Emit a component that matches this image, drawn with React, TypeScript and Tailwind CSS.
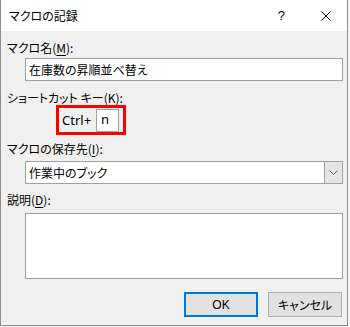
import React from 'react'

// Excel "マクロの記録" dialog

const jp = "font-['Segoe_UI','Noto_Sans_CJK_JP',sans-serif] [font-feature-settings:'palt']"

function Label({ text, k }: { text: string; k: string }) {
  return (
    <div className="h-[16px] leading-[16px] text-[12px] text-black">
      {text}(<span className="underline underline-offset-2">{k}</span>):
    </div>
  )
}

export default function App() {
  return (
    <div className={`w-[350px] h-[327px] bg-[#f4f4f4] ${jp}`}>
      <div className="w-[348px] h-[326px] flex flex-col border-x border-b border-[#8c8c8c] bg-[#f0f0f0]">
        {/* title bar */}
        <div className="h-[31px] bg-white flex items-center pl-[8px]">
          <span className="text-[12px] text-black">マクロの記録</span>
          <span className="ml-auto text-[13px] text-black font-['Liberation_Sans',sans-serif]">?</span>
          <svg className="ml-[36px] mr-[16px]" width="10" height="10" viewBox="0 0 10 10">
            <path d="M0.5 0.5L9.5 9.5M9.5 0.5L0.5 9.5" stroke="#000" strokeWidth="1" />
          </svg>
        </div>

        {/* body */}
        <div className="flex-1 flex flex-col pl-[6px] pr-[4px]">
          <div className="mt-[9px]">
            <Label text="マクロ名" k="M" />
          </div>
          <div className="mt-[2px] ml-[18px] w-[318px] h-[23px] bg-white border border-[#a0a0a0] flex items-center pl-[3px] text-[12px] text-black">
            在庫数の昇順並べ替え
          </div>

          <div className="mt-[9px]">
            <Label text="ショートカット キー" k="K" />
          </div>
          <div className="-mt-[1px] ml-[49px] w-[70px] h-[30px] border-[3px] border-[#ff0000] flex items-start pt-[1px] pl-[3px]">
            <span className="h-[23px] leading-[23px] text-[13px] font-normal text-black font-['Noto_Sans',sans-serif] w-[34px]">Ctrl+</span>
            <div className="w-[23px] h-[23px] bg-white border border-[#a0a0a0] flex items-center pl-[4px] text-[13px] font-normal text-black font-['Noto_Sans',sans-serif] leading-none pb-[3px]">
              n
            </div>
          </div>

          <div className="mt-[6px]">
            <Label text="マクロの保存先" k="I" />
          </div>
          <div className="mt-[4px] ml-[18px] w-[318px] h-[23px] bg-white border border-[#a0a0a0] flex items-center text-[12px] text-black">
            <span className="pl-[3px] flex-1">作業中のブック</span>
            <div className="w-[18px] h-full bg-[#e5e5e5] border-l border-[#a0a0a0] flex items-center justify-center">
              <svg width="9" height="5" viewBox="0 0 9 5">
                <path d="M0.5 0.5L4.5 4.5L8.5 0.5" fill="none" stroke="#606060" strokeWidth="1" />
              </svg>
            </div>
          </div>

          <div className="mt-[8px]">
            <Label text="説明" k="D" />
          </div>
          <div className="mt-[5px] ml-[18px] w-[318px] h-[66px] bg-white border border-[#a0a0a0]" />

          <div className="mt-[13px] flex justify-end gap-[10px] pr-[1px] font-['Liberation_Sans',sans-serif]">
            <button className="w-[74px] h-[25px] bg-[#e1e1e1] border-2 border-[#0078d7] text-[12px] text-black">
              OK
            </button>
            <button className={`w-[74px] h-[25px] bg-[#e1e1e1] border border-[#adadad] text-[12px] text-black ${jp}`}>
              キャンセル
            </button>
          </div>
        </div>
      </div>
    </div>
  )
}
